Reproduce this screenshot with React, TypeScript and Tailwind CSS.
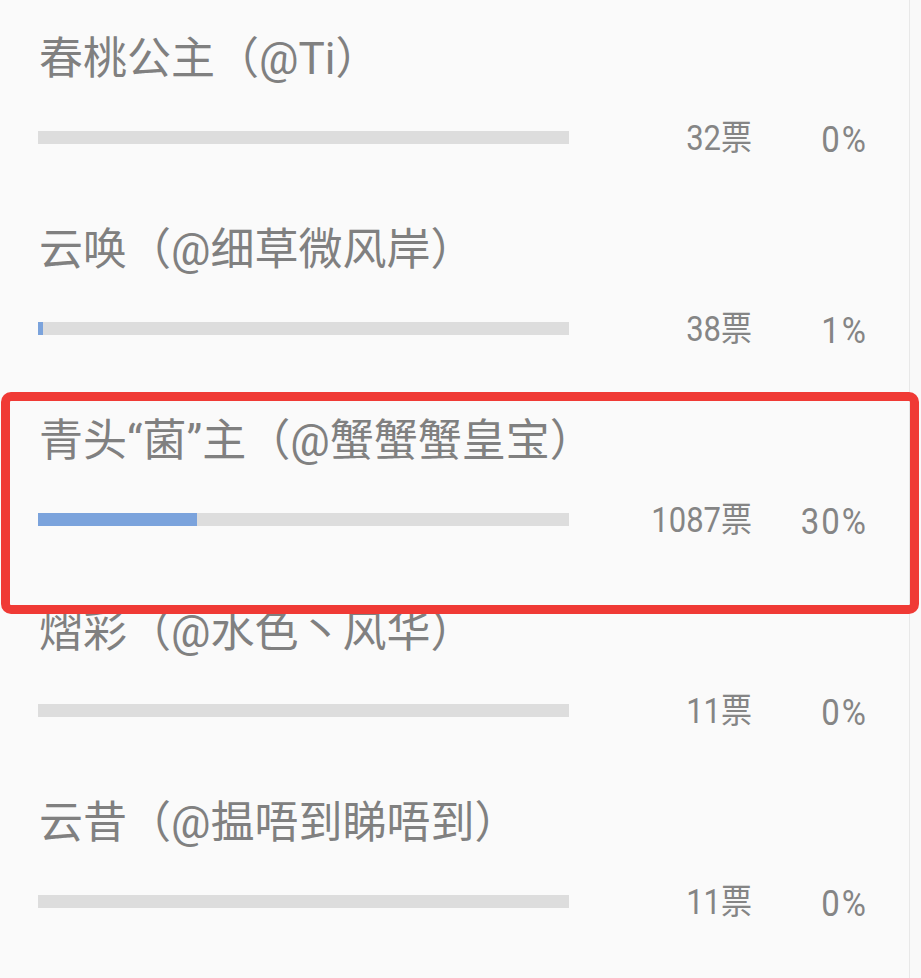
import React from 'react';

interface Option {
  name: string;
  votes: number;
  percent: number;
}

const options: Option[] = [
  { name: '春桃公主（@Ti）', votes: 32, percent: 0 },
  { name: '云唤（@细草微风岸）', votes: 38, percent: 1 },
  { name: '青头“菌”主（@蟹蟹蟹皇宝）', votes: 1087, percent: 30 },
  { name: '熠彩（@水色丶风华）', votes: 11, percent: 0 },
  { name: '云昔（@揾唔到睇唔到）', votes: 11, percent: 0 },
];

const font = { fontFamily: 'Roboto, "Noto Sans CJK SC", sans-serif' };

function VoteRow({ option }: { option: Option }) {
  return (
    <div className="pb-[63px]">
      <div className="pl-[39px] h-[60px] leading-[60px] text-[44px] text-[#808080] whitespace-nowrap">
        {option.name}
      </div>
      <div className="mt-[28px] h-[40px] flex items-center pl-[38px]">
        <div className="w-[531px] h-[13px] bg-[#dddddd]">
          <div className="h-full bg-[#7ba3dc]" style={{ width: `${option.percent}%` }} />
        </div>
        <div className="w-[183px] pt-[4px] text-right text-[31px] text-[#858585] scale-y-[1.12]">
          {option.votes}票
        </div>
        <div className="w-[116px] pt-[4px] text-right text-[33px] tracking-[2px] text-[#858585] scale-y-[1.12]">
          {option.percent}%
        </div>
      </div>
    </div>
  );
}

export default function App() {
  return (
    <div className="relative w-[921px] h-[978px] overflow-hidden bg-[#f9f9f9]" style={font}>
      <div className="w-[910px] h-full bg-[#fafafa] border-r border-[#e8e8e8] pt-[29px]">
        {options.map(option => (
          <VoteRow key={option.name} option={option} />
        ))}
      </div>

      {/* highlight annotation */}
      <div className="absolute left-[1px] top-[392px] w-[918px] h-[222px] border-[9px] border-[#f03a35] rounded-[10px]" />
    </div>
  );
}
